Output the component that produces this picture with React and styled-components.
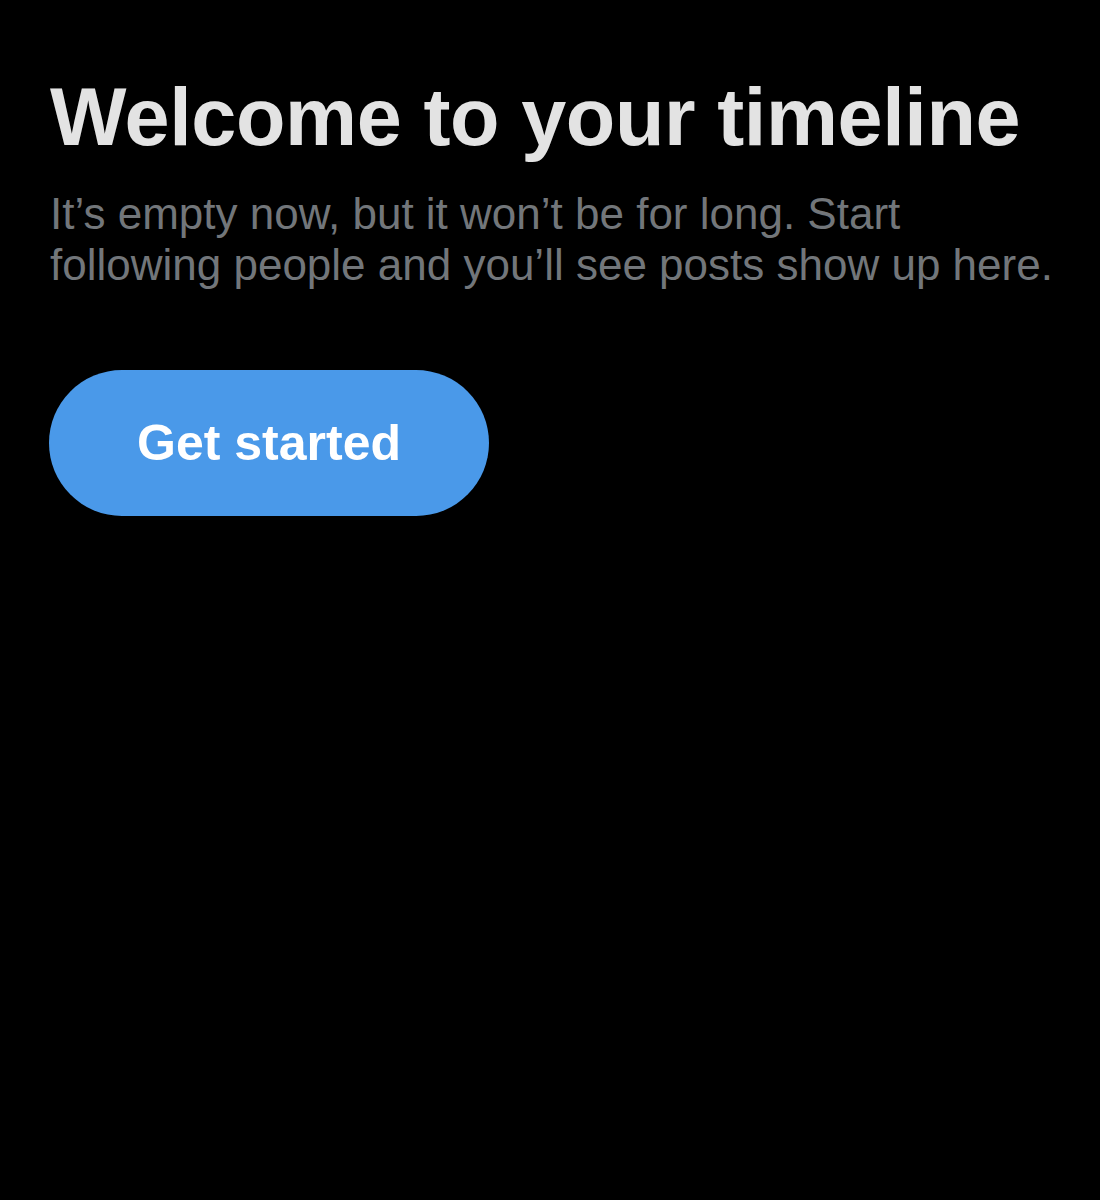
import React from 'react'
import styled, { createGlobalStyle } from 'styled-components'

const GlobalStyle = createGlobalStyle`
  html, body {
    margin: 0;
    padding: 0;
    background: #000000;
  }
  body {
    font-family: "Liberation Sans", Arial, sans-serif;
  }
`

const Page = styled.div`
  width: 1100px;
  height: 1200px;
  background: #000000;
  box-sizing: border-box;
  padding: 69px 50px 0 50px;
  display: flex;
  flex-direction: column;
  align-items: flex-start;
`

const Title = styled.h1`
  margin: 0;
  color: #e3e3e3;
  font-family: "Liberation Sans", Arial, sans-serif;
  font-weight: 700;
  font-size: 81px;
  line-height: 96px;
  letter-spacing: -0.4px;
  white-space: nowrap;
`

const Subtitle = styled.p`
  margin: 23px 0 0 0;
  color: #72767a;
  font-family: "Liberation Sans", Arial, sans-serif;
  font-weight: 400;
  font-size: 44px;
  line-height: 51px;
  width: 1010px;
`

const StartButton = styled.button`
  margin-top: 80px;
  margin-left: -1px;
  width: 440px;
  height: 146px;
  border: none;
  border-radius: 73px;
  background: #4a99e9;
  color: #ffffff;
  font-family: "Liberation Sans", Arial, sans-serif;
  font-weight: 700;
  font-size: 50px;
  cursor: pointer;
  display: flex;
  align-items: center;
  justify-content: center;
`

const App = () => {
  return (
    <>
      <GlobalStyle />
      <Page>
        <Title>Welcome to your timeline</Title>
        <Subtitle>
          It’s empty now, but it won’t be for long. Start following people and you’ll see posts show up here.
        </Subtitle>
        <StartButton>Get started</StartButton>
      </Page>
    </>
  )
}

export default App
